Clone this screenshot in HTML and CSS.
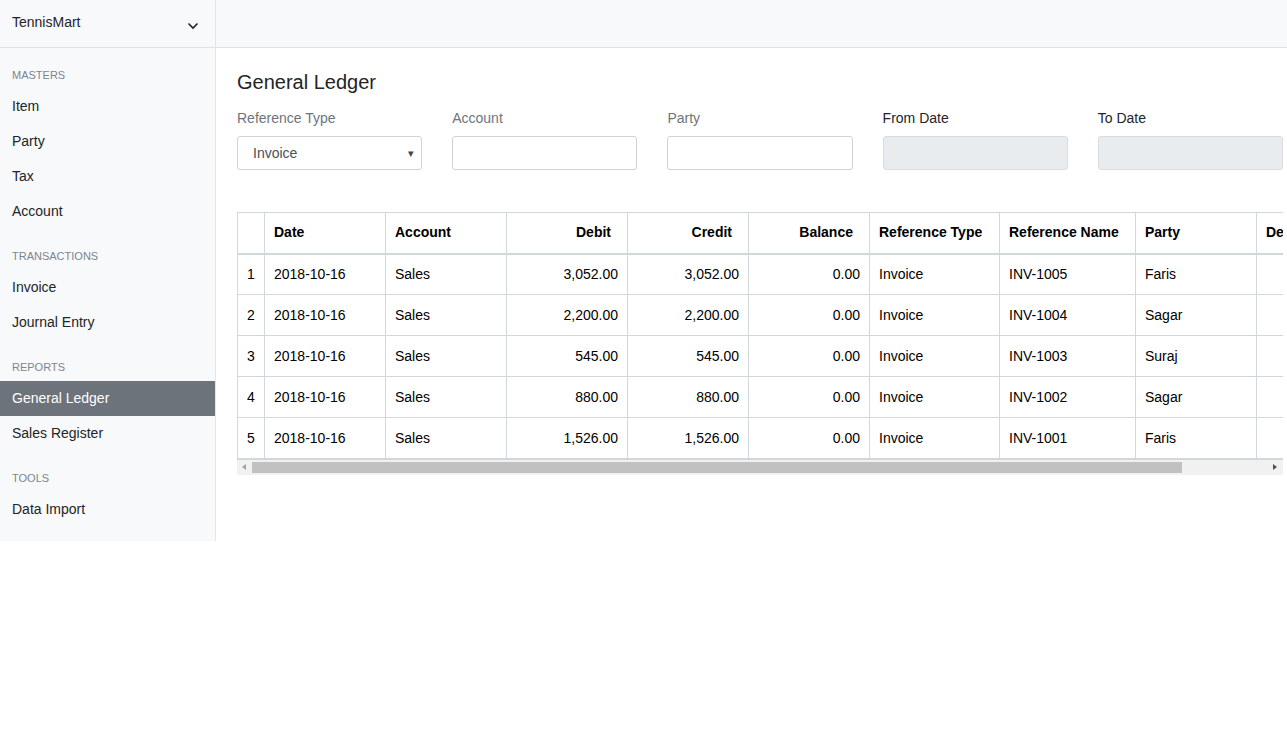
FILE: index.html
```html
<!DOCTYPE html>
<html>
<head>
<meta charset="utf-8">
<link rel="stylesheet" href="styles.css">
</head>
<body>
<div class="app">
  <aside class="sidebar">
    <div class="company">
      <span>TennisMart</span>
      <svg class="chev" width="12" height="8" viewBox="0 0 12 8"><path d="M1.5 1.5 L6 6 L10.5 1.5" fill="none" stroke="#222" stroke-width="1.6"/></svg>
    </div>
    <div class="section">
      <div class="label">Masters</div>
      <div class="item">Item</div>
      <div class="item">Party</div>
      <div class="item">Tax</div>
      <div class="item">Account</div>
    </div>
    <div class="section">
      <div class="label">Transactions</div>
      <div class="item">Invoice</div>
      <div class="item">Journal Entry</div>
    </div>
    <div class="section">
      <div class="label">Reports</div>
      <div class="item active">General Ledger</div>
      <div class="item">Sales Register</div>
    </div>
    <div class="section last">
      <div class="label">Tools</div>
      <div class="item">Data Import</div>
    </div>
  </aside>
  <main class="main">
    <div class="topbar"></div>
    <div class="content">
      <h4 class="title">General Ledger</h4>
      <div class="filters">
        <div class="field">
          <div class="flabel">Reference Type</div>
          <div class="input select"><span>Invoice</span><span class="caret">▾</span></div>
        </div>
        <div class="field">
          <div class="flabel">Account</div>
          <div class="input"></div>
        </div>
        <div class="field">
          <div class="flabel">Party</div>
          <div class="input"></div>
        </div>
        <div class="field">
          <div class="flabel dark">From Date</div>
          <div class="input disabled"></div>
        </div>
        <div class="field">
          <div class="flabel dark">To Date</div>
          <div class="input disabled"></div>
        </div>
      </div>
      <div class="tablewrap">
        <div class="tableclip">
          <table class="grid">
            <colgroup>
              <col class="c-idx"><col class="c-std"><col class="c-std"><col class="c-std"><col class="c-std"><col class="c-std"><col class="c-rt"><col class="c-rn"><col class="c-std"><col class="c-desc">
            </colgroup>
            <thead>
              <tr><th></th><th>Date</th><th>Account</th><th class="num">Debit</th><th class="num">Credit</th><th class="num">Balance</th><th>Reference Type</th><th>Reference Name</th><th>Party</th><th>Description</th></tr>
            </thead>
            <tbody>
              <tr><td class="idx">1</td><td>2018-10-16</td><td>Sales</td><td class="num">3,052.00</td><td class="num">3,052.00</td><td class="num">0.00</td><td>Invoice</td><td>INV-1005</td><td>Faris</td><td></td></tr>
              <tr><td class="idx">2</td><td>2018-10-16</td><td>Sales</td><td class="num">2,200.00</td><td class="num">2,200.00</td><td class="num">0.00</td><td>Invoice</td><td>INV-1004</td><td>Sagar</td><td></td></tr>
              <tr><td class="idx">3</td><td>2018-10-16</td><td>Sales</td><td class="num">545.00</td><td class="num">545.00</td><td class="num">0.00</td><td>Invoice</td><td>INV-1003</td><td>Suraj</td><td></td></tr>
              <tr><td class="idx">4</td><td>2018-10-16</td><td>Sales</td><td class="num">880.00</td><td class="num">880.00</td><td class="num">0.00</td><td>Invoice</td><td>INV-1002</td><td>Sagar</td><td></td></tr>
              <tr><td class="idx">5</td><td>2018-10-16</td><td>Sales</td><td class="num">1,526.00</td><td class="num">1,526.00</td><td class="num">0.00</td><td>Invoice</td><td>INV-1001</td><td>Faris</td><td></td></tr>
            </tbody>
          </table>
        </div>
        <div class="hscroll">
          <span class="arrow left"></span>
          <div class="track"><div class="thumb"></div></div>
          <span class="arrow right"></span>
        </div>
      </div>
    </div>
  </main>
</div>
</body>
</html>
```
FILE: styles.css
```css
* { box-sizing: border-box; }
html, body { margin: 0; padding: 0; background: #fff; }
body {
  font-family: "Liberation Sans", Arial, sans-serif;
  font-size: 14px;
  color: #212529;
  overflow: hidden;
}
.app { display: flex; align-items: flex-start; width: 1287px; }

.sidebar {
  width: 216px;
  flex: 0 0 216px;
  background: #f8f9fa;
  border-right: 1px solid #e4e7ea;
  padding-bottom: 14px;
}
.company {
  height: 48px;
  border-bottom: 1px solid #dfe3e7;
  display: flex;
  justify-content: space-between;
  padding: 14px 16px 0 12px;
  font-size: 14px;
  color: #1f2328;
}
.company span { line-height: 16px; }
.chev { margin-top: 8px; }
.section { padding-top: 20px; }
.label {
  text-transform: uppercase;
  font-size: 11px;
  line-height: 15px;
  color: #7c8590;
  padding-left: 12px;
  margin-bottom: 6px;
}
.item {
  height: 35px;
  line-height: 35px;
  padding-left: 12px;
  font-size: 14px;
  color: #212529;
}
.item.active { background: #6c737b; color: #fff; }

.main { flex: 1; min-width: 0; }
.topbar {
  height: 48px;
  background: #f8f9fa;
  border-bottom: 1px solid #dfe3e7;
}
.content { padding: 22px 4px 0 21px; }
.title {
  margin: 0 0 14px 0;
  font-size: 20px;
  line-height: 24px;
  font-weight: 400;
  color: #212529;
}
.filters {
  display: grid;
  grid-template-columns: repeat(5, 1fr);
  column-gap: 30px;
}
.flabel {
  font-size: 14px;
  line-height: 21px;
  color: #6c757d;
  margin-bottom: 7px;
}
.flabel.dark { color: #212529; }
.input {
  height: 34px;
  border: 1px solid #ced4da;
  border-radius: 3px;
  background: #fff;
}
.input.disabled { background: #e9ecef; border-color: #d9dde1; }
.input.select {
  display: flex;
  justify-content: space-between;
  align-items: center;
  padding: 0 7px 0 15px;
  color: #495057;
}
.caret { font-size: 11px; color: #444; }

.tablewrap { margin-top: 42px; width: 1046px; }
.tableclip { overflow: hidden; }
.grid {
  border-collapse: collapse;
  table-layout: fixed;
  width: 1146px;
}
.c-idx { width: 27px; }
.c-std { width: 121px; }
.c-rt { width: 130px; }
.c-rn { width: 136px; }
.c-desc { width: 135px; }
.grid th, .grid td {
  border: 1px solid #d1d8dd;
  height: 41px;
  padding: 0 9px;
  white-space: nowrap;
  overflow: hidden;
  text-align: left;
  color: #000;
}
.grid th { font-weight: 700; border-bottom-width: 2px; padding-bottom: 2px; }
.grid .num { text-align: right; padding-right: 9px; }
.grid th.num { padding-right: 16px; }
.grid td.idx { padding: 0 0 0 9px; }
.grid tbody tr:last-child td { border-bottom-width: 2px; }

.hscroll {
  height: 15px;
  background: #f1f1f1;
  display: flex;
  align-items: center;
}
.track { flex: 1; height: 15px; display: flex; align-items: center; }
.thumb { width: 930px; height: 11px; background: #c1c1c1; }
.arrow { width: 15px; height: 15px; position: relative; flex: 0 0 15px; }
.arrow.left::after {
  content: ""; position: absolute; left: 5px; top: 4px;
  border-style: solid; border-width: 3.5px 4px 3.5px 0;
  border-color: transparent #a3a3a3 transparent transparent;
}
.arrow.right::after {
  content: ""; position: absolute; left: 5px; top: 4px;
  border-style: solid; border-width: 3.5px 0 3.5px 4px;
  border-color: transparent transparent transparent #505050;
}
```
